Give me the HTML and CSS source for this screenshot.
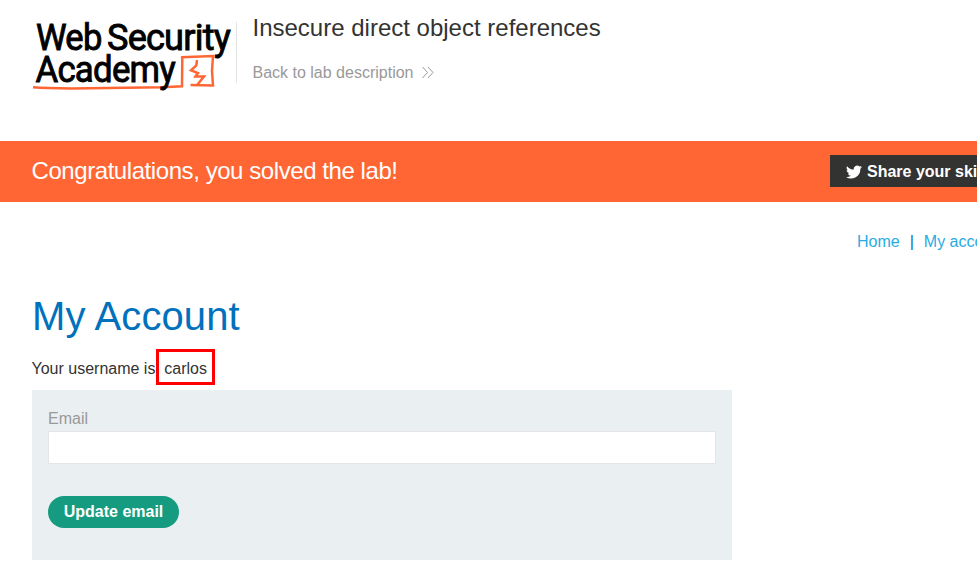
FILE: index.html
```
<!DOCTYPE html>
<html lang="en">
<head>
<meta charset="utf-8">
<title>Insecure direct object references</title>
<link rel="stylesheet" href="styles.css">
</head>
<body>
<header class="lab-header">
  <svg class="logo" width="204" height="80" viewBox="32 15 204 80" role="img" aria-label="Web Security Academy">
    <g class="logo-mark">
      <path d="M33 87.300Q50 88.800 90 88.300T162 87.200L182 86.200L182.300 57.500L181 57.200L213 56L212 71L213 85.500L190.500 85"/>
      <path d="M197 60L196.300 65.300L191 70.300L198 73L195.500 76.500L204 76.500L197.300 84.800"/>
    </g>
    <g class="logo-text">
      <text x="36" y="49.5" textLength="65.5" lengthAdjust="spacingAndGlyphs">Web</text>
      <text x="107" y="49.5" textLength="123" lengthAdjust="spacingAndGlyphs">Security</text>
      <text x="35.500" y="82" textLength="139.5" lengthAdjust="spacingAndGlyphs">Academy</text>
    </g>
  </svg>
  <div class="lab-title">
    <h2>Insecure direct object references</h2>
    <a class="back" href="#">Back to lab description
      <svg width="14" height="14" viewBox="0 0 14 14"><path d="M1.500 1L6.500 6.500L1.500 12M7 1L12 6.500L7 12"/></svg>
    </a>
  </div>
</header>
<section class="banner">
  <h4>Congratulations, you solved the lab!</h4>
  <a class="share" href="#">
    <svg width="16" height="16" viewBox="0 0 24 24"><path d="M24 4.600a10 10 0 0 1-2.800.8 5 5 0 0 0 2.100-2.700 10 10 0 0 1-3.100 1.200 4.900 4.900 0 0 0-8.400 4.500A14 14 0 0 1 1.700 3.200a4.900 4.900 0 0 0 1.500 6.500 5 5 0 0 1-2.200-.6 4.900 4.900 0 0 0 3.900 4.900 5 5 0 0 1-2.200.1 4.900 4.900 0 0 0 4.600 3.400A10 10 0 0 1 0 19.500a14 14 0 0 0 21.500-12.400A10 10 0 0 0 24 4.600z"/></svg>
    <span>Share your skills!</span>
  </a>
</section>
<nav class="links"><a href="#">Home</a><span>|</span><a href="#">My account</a></nav>
<main>
  <h1>My Account</h1>
  <p>Your username is: <span class="user">carlos</span></p>
  <form class="card">
    <label for="email">Email</label>
    <input id="email" type="email">
    <button type="button">Update email</button>
  </form>
</main>
</body>
</html>
```
FILE: styles.css
```
*, *::after { box-sizing: border-box; }
body {
  margin: 0;
  height: 565px;
  overflow: hidden;
  background: #fff;
  color: #333332;
  font: 16px/20px "Liberation Sans", Arial, sans-serif;
}
h1, h2, h4, p { margin: 0; font-weight: 400; }
a { text-decoration: none; }
.lab-header { display: flex; height: 141px; padding: 15px 0 0 32px; }
.logo { flex: none; }
.logo-text { font-family: Roboto, sans-serif; font-size: 37px; font-weight: 400; letter-spacing: -0.800px; fill: #000; stroke: #000; stroke-width: 0.900; }
.logo-mark { fill: none; stroke: #ff6633; stroke-width: 2.500; }
.lab-title { height: 61px; margin-top: 7px; padding-left: 15.500px; border-left: 1px solid #e5e5e5; }
.lab-title h2 { margin-top: -8px; font-size: 24px; line-height: 28px; }
.back { display: flex; align-items: center; gap: 7.500px; margin-top: 21px; color: #999; line-height: 20px; }
.back svg { fill: none; stroke: #999; stroke-width: 1; }
.banner {
  display: flex;
  align-items: flex-start;
  height: 61px;
  padding: 14px 0 0 31.500px;
  background: #ff6633;
  color: #fff;
}
.banner h4 { flex: none; width: 798.500px; padding-top: 2px; font-size: 24px; line-height: 28px; letter-spacing: -0.430px; }
.share {
  display: flex;
  flex: none;
  align-items: center;
  gap: 5px;
  width: 200px;
  height: 32px;
  padding: 1px 0 0 16px;
  background: #333332;
  color: #fff;
  font-weight: 700;
  white-space: nowrap;
}
.share svg { fill: #fff; }
.links { display: flex; gap: 10px; margin: 30px 0 0 857px; color: #0071bc; white-space: nowrap; }
.links a { color: #29abe2; }
main { width: 732px; padding: 40px 0 0 32px; }
h1 { color: #0071bc; font-size: 40px; line-height: 48px; letter-spacing: 0.100px; }
p { margin: 19px 0 0 -0.500px; }
.user { position: relative; }
.user::after {
  content: "";
  position: absolute;
  left: -8px;
  top: -11px;
  width: 59px;
  height: 36px;
  border: 3px solid #f00;
}
.card { display: flex; flex-direction: column; align-items: flex-start; height: 170px; margin-top: 11px; padding: 19px 16px; background: #eaeff2; }
.card label { color: #999; }
.card input { width: 668px; height: 33px; margin-top: 2px; border: 1px solid #e5e5e5; background: #fff; }
.card button {
  width: 131px;
  height: 32px;
  margin-top: 32px;
  padding: 0;
  border: 0;
  border-radius: 16px;
  background: #159c80;
  color: #fff;
  font: 700 16px/32px "Liberation Sans", Arial, sans-serif;
}
```
